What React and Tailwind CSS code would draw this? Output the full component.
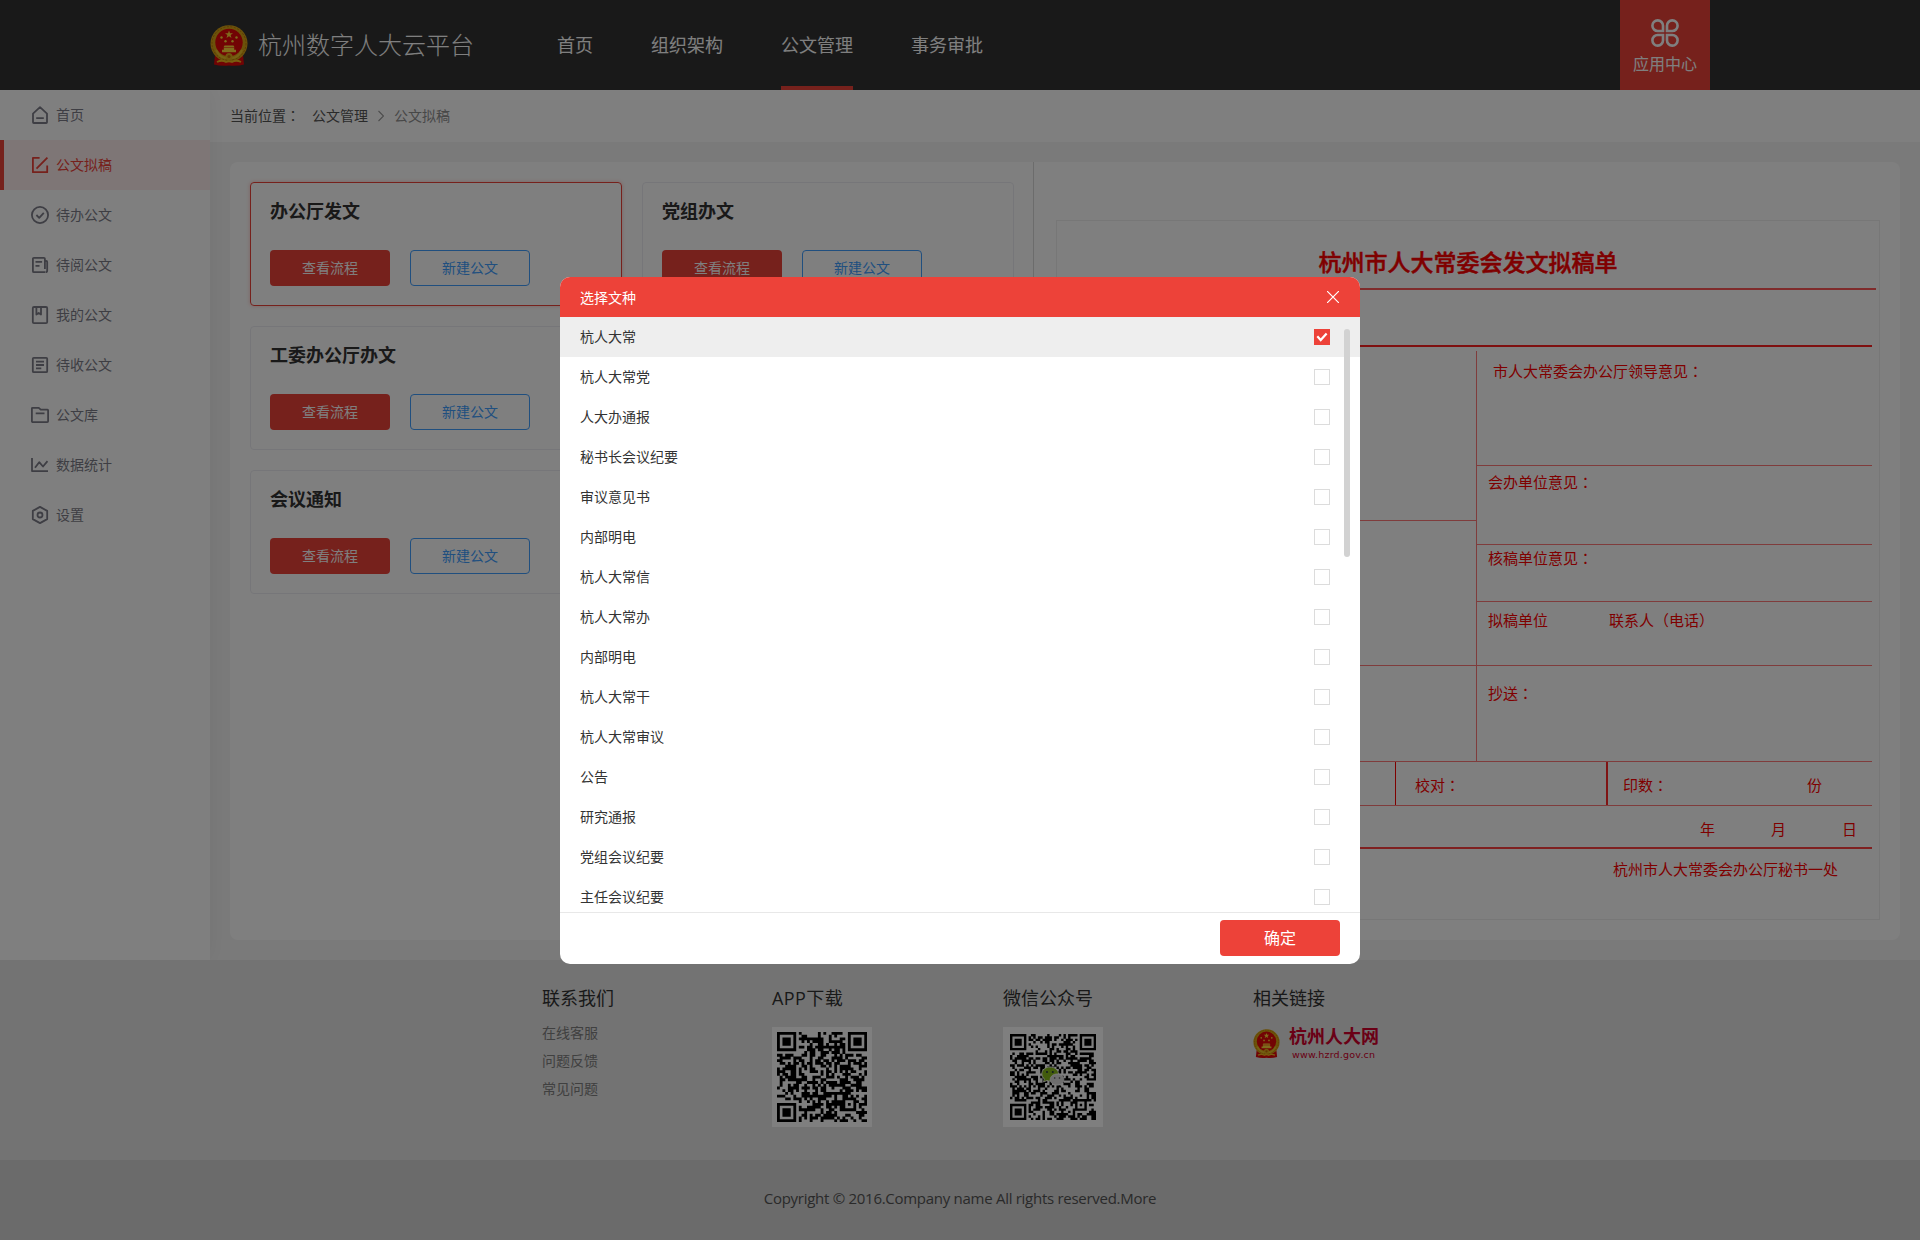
import React from 'react';

const NAV = ['首页', '组织架构', '公文管理', '事务审批'];

const SIDE = [
  { label: '首页', icon: 'home' },
  { label: '公文拟稿', icon: 'edit', active: true },
  { label: '待办公文', icon: 'check' },
  { label: '待阅公文', icon: 'read' },
  { label: '我的公文', icon: 'mine' },
  { label: '待收公文', icon: 'inbox' },
  { label: '公文库', icon: 'folder' },
  { label: '数据统计', icon: 'chart' },
  { label: '设置', icon: 'setting' },
];

const CARDS = [
  { title: '办公厅发文', active: true },
  { title: '党组办文' },
  { title: '工委办公厅办文' },
  { title: '信息刊物' },
  { title: '会议通知' },
];

const TYPES = [
  '杭人大常', '杭人大常党', '人大办通报', '秘书长会议纪要', '审议意见书',
  '内部明电', '杭人大常信', '杭人大常办', '内部明电', '杭人大常干',
  '杭人大常审议', '公告', '研究通报', '党组会议纪要', '主任会议纪要',
];

const SIDE_PATHS = {
  home: <path d="M2 7.6 9 1.2l7 6.4V16.2a.8.8 0 0 1-.8.8H2.8a.8.8 0 0 1-.8-.8zM5.2 12.2h7.6" />,
  edit: <path d="M8.6 1.9H1.9v14.3h14.3V9.4M5.5 12.6 16.4 1.7" />,
  check: (
    <>
      <circle cx="9" cy="9" r="8.1" />
      <path d="M5.4 9l2.8 2.8 4.6-5" />
    </>
  ),
  read: <path d="M14 16.2H2.9a1 1 0 0 1-1-1V2.8a1 1 0 0 1 1-1h10a1 1 0 0 1 1 1V13M14 5h1.3a.9.9 0 0 1 .9.9v8.6c0 1-.8 1.7-1.7 1.7M4.5 5.9h6.6M4.5 9.9h4" />,
  mine: (
    <>
      <rect x="1.8" y="1" width="14.4" height="16.1" rx="1.2" />
      <path d="M5.4 1v7.6L7.7 7l2.3 1.6V1" />
    </>
  ),
  inbox: (
    <>
      <rect x="1.8" y="1.8" width="14.4" height="14.4" rx="1" />
      <path d="M5 5.6h8M5 9h8M5 12.4h5.3" />
    </>
  ),
  folder: <path d="M.9 15.2V2.400a.6.6 0 0 1 .6-.6H7.800l1.900 1.900h6.800a.6.6 0 0 1 .6.6v10.900a.9.9 0 0 1-.9.9H1.800a.9.9 0 0 1-.9-.9zM4.700 7.400h8.800" />,
  chart: <path d="M1 2v13.100h16M4 11.800l4.200-5.600 3.800 4.300 4.500-5.300" />,
  setting: (
    <>
      <path d="M9 .9 16.200 4.900v8.200L9 17.100 1.800 13.100V4.900z" />
      <circle cx="9" cy="9" r="2.500" />
    </>
  ),
};

function SideIcon({ name }) {
  return (
    <svg width="18" height="18" viewBox="0 0 18 18" fill="none" stroke="currentColor" strokeWidth="1.8" strokeLinejoin="round">
      {SIDE_PATHS[name]}
    </svg>
  );
}

function Emblem({ className }) {
  return (
    <svg className={className} viewBox="0 0 38 41" fill="none">
      <path d="M5 30 4 39.500q7 2 15 1 8 1 15-1L33 30z" fill="#e00808" />
      <ellipse cx="19" cy="18.500" rx="18.500" ry="18.300" fill="#d9a514" />
      <ellipse cx="19" cy="18.500" rx="17" ry="16.800" stroke="#b87708" strokeDasharray="2 1.500" />
      <ellipse cx="19" cy="17.500" rx="13.700" ry="13.800" fill="#e40808" />
      <path d="M19 5.500l1 2.800h3l-2.400 1.700.9 2.900-2.500-1.700-2.500 1.700.9-2.900L15 8.300h3z" fill="#ffd83a" />
      <g fill="#ffd83a">
        <circle cx="11.500" cy="12.500" r="1.200" />
        <circle cx="26.500" cy="12.500" r="1.200" />
        <circle cx="15.500" cy="16.200" r="1.200" />
        <circle cx="22.500" cy="16.200" r="1.200" />
        <path d="M14.500 20.500h9l1 1.800h-11zM13.800 22.800h10.400v2H26v2.400H12v-2.400h1.800z" />
      </g>
      <path d="M6 25q4 8 10 8h6q6 0 10-8" stroke="#ecc02a" strokeWidth="2.200" />
      <circle cx="19" cy="31.500" r="3.600" fill="#e2ad1c" />
      <circle cx="19" cy="31.500" r="1.600" fill="#c66c06" />
      <path d="M7 37q5-2.500 9 0 3-1.500 6 0 4-2.500 9 0" stroke="#f0bb1f" strokeWidth="1.800" />
    </svg>
  );
}

function finderCell(r, c, n) {
  const at = (r0, c0) => {
    const y = r - r0;
    const x = c - c0;
    if (y < -1 || y > 7 || x < -1 || x > 7) return null;
    if (y === -1 || y === 7 || x === -1 || x === 7) return false;
    const ring = Math.max(Math.abs(y - 3), Math.abs(x - 3));
    return ring !== 2;
  };
  for (const p of [at(0, 0), at(0, n - 7), at(n - 7, 0)]) if (p !== null) return p;
  const d = Math.max(Math.abs(r - (n - 7)), Math.abs(c - (n - 7)));
  if (d <= 2) return d !== 1;
  return null;
}

function qrPath(n, seed) {
  let s = seed;
  let d = '';
  for (let r = 0; r < n; r++) {
    for (let c = 0; c < n; c++) {
      s = (Math.imul(s, 1103515245) + 12345) & 0x7fffffff;
      const fixed = finderCell(r, c, n);
      const on = fixed === null ? ((s >> 16) & 255) < 132 : fixed;
      if (on) d += `M${c} ${r}h1.04v1.04h-1.04z`;
    }
  }
  return d;
}

const QR_APP = qrPath(33, 4711);
const QR_WECHAT = qrPath(37, 90217);

function QrCode({ size, modules, path, wechat }) {
  return (
    <div className="relative flex h-[100px] w-[100px] items-center justify-center bg-white">
      <svg width={size} height={size} viewBox={`0 0 ${modules} ${modules}`}>
        <path d={path} fill="#000" />
      </svg>
      {wechat && (
        <svg className="absolute left-[38px] top-[39px]" width="24" height="21" viewBox="0 0 24 21">
          <path d="M9 1c4.800 0 8.500 3 8.500 7s-3.700 7-8.500 7q-1.500 0-3-.5L2.500 16l.8-3Q.8 11 .8 8C.8 4 4.300 1 9 1z" fill="#84b818" stroke="#fff" strokeWidth=".8" />
          <circle cx="6" cy="6" r="1" fill="#234" />
          <circle cx="11.800" cy="6" r="1" fill="#234" />
          <path d="M16 8c3.800 0 6.800 2.400 6.800 5.500 0 1.800-1 3.200-2.300 4.200l.5 2-2.400-1.200Q17.400 19 16 19c-3.800 0-6.800-2.500-6.800-5.500S12.200 8 16 8z" fill="#dcdcdc" stroke="#fff" strokeWidth=".8" />
          <circle cx="13.700" cy="12" r=".8" fill="#444" />
          <circle cx="18.500" cy="12" r=".8" fill="#444" />
        </svg>
      )}
    </div>
  );
}

/* Full-width punctuation set in the centre of its em box. */
function Mid({ children }) {
  return <span className="font-['Noto_Sans_CJK_TC',sans-serif]">{children}</span>;
}

function Header() {
  return (
    <header className="flex h-[90px] bg-[#333]">
      <div className="ml-[210px] flex w-[347px] items-center">
        <Emblem className="h-[41px] w-[38px]" />
        <span className="ml-[10px] pb-px text-[24px] font-light leading-none text-white">杭州数字人大云平台</span>
      </div>
      <nav className="flex gap-[58px] text-[18px] text-white">
        {NAV.map((n) => (
          <div key={n} className={`flex items-center border-y-4 border-t-transparent ${n === '公文管理' ? 'border-b-[#ed4239]' : 'border-b-transparent'}`}>
            {n}
          </div>
        ))}
      </nav>
      <div className="ml-auto mr-[210px] flex w-[90px] flex-col items-center bg-[#ed4239] pt-[19px] text-white">
        <svg width="28" height="28" viewBox="0 0 28 28" fill="none" stroke="currentColor" strokeWidth="2.600">
          <path d="M12 12H6.800A5.300 5.300 0 1 1 12 6.800zM16 12V6.800A5.300 5.300 0 1 1 21.200 12zM12 16v5.200A5.300 5.300 0 1 1 6.800 16zM16 16h5.200A5.300 5.300 0 1 1 16 21.200z" />
        </svg>
        <span className="mt-[5px] text-[16px] leading-6">应用中心</span>
      </div>
    </header>
  );
}

function Sidebar() {
  return (
    <aside className="relative z-10 w-[210px] shrink-0 bg-white text-[14px] text-[#7d7d88] shadow-[0_0_20px_rgba(0,0,0,0.06)]">
      {SIDE.map((s) => (
        <div
          key={s.label}
          className={`flex h-[50px] items-center gap-[7px] border-l-4 pl-[27px] ${s.active ? 'border-[#ed4239] bg-[#fdecec] text-[#ed4239]' : 'border-transparent'}`}
        >
          <SideIcon name={s.icon} />
          <span className="pb-[2px]">{s.label}</span>
        </div>
      ))}
    </aside>
  );
}

function Card({ title, active }) {
  return (
    <div className={`h-[124px] rounded border px-[19px] pt-[14px] ${active ? 'border-[#ed4239] shadow-[0_0_4px_rgba(237,66,57,0.3)]' : 'border-[#ededf2]'}`}>
      <h3 className="text-[18px] font-bold leading-7 text-[#333]">{title}</h3>
      <div className="mt-[25px] flex gap-5 text-[14px]">
        <button className="h-9 w-[120px] rounded bg-[#ed4239] pb-[2px] text-white">查看流程</button>
        <button className="h-9 w-[120px] rounded border border-[#409eff] pb-[2px] text-[#409eff]">新建公文</button>
      </div>
    </div>
  );
}

const THIN = 'border-[#ff7878]';

function DraftForm() {
  return (
    <div className="flex h-[700px] w-[824px] flex-col border border-[#eee] text-[15px] leading-[20px] text-[#f00]">
      <div className="flex h-[69px] items-center justify-center border-b-2 border-[#ff5656] pt-[14px] text-[23px] font-medium [-webkit-text-stroke:0.5px_#f00] mr-[3px] pl-[3px]">
        杭州市人大常委会发文拟稿单
      </div>
      <div className="ml-[8px] mr-[7px] h-[57px] border-b-2 border-[#ff2020]" />
      <div className="ml-[8px] mr-[7px] mt-[4px] flex h-[411px]">
        <div className="flex w-[411px] flex-col">
          <div className={`h-[170px] border-b ${THIN}`} />
          <div className={`h-[145px] border-b ${THIN}`} />
          <div className={`flex-1 border-b ${THIN}`} />
        </div>
        <div className={`flex flex-1 flex-col border-l ${THIN}`}>
          <div className={`h-[115px] border-b pl-4 pt-[10px] ${THIN}`}>市人大常委会办公厅领导意见<Mid>：</Mid></div>
          <div className={`h-[79px] border-b pl-[11px] pt-[6px] ${THIN}`}>会办单位意见<Mid>：</Mid></div>
          <div className={`h-[57px] border-b pl-[11px] pt-[3px] ${THIN}`}>核稿单位意见<Mid>：</Mid></div>
          <div className={`flex h-[64px] border-b pl-[11px] pt-[8px] ${THIN}`}>
            <span className="w-[121px]">拟稿单位</span>
            <span>联系人<Mid>（</Mid>电话<Mid>）</Mid></span>
          </div>
          <div className={`flex-1 border-b pl-[11px] pt-[17px] ${THIN}`}>抄送<Mid>：</Mid></div>
        </div>
      </div>
      <div className={`ml-[8px] mr-[7px] flex h-[44px] items-center border-b ${THIN}`}>
        <div className="h-full w-[331px] border-r border-[#f00]" />
        <div className="flex h-full w-[212px] items-center border-r-2 border-[#ff2828] pl-[19px] pt-[2px]">校对<Mid>：</Mid></div>
        <div className="flex flex-1 items-center justify-between pl-[15px] pr-[50px] pt-[2px]">
          <span>印数<Mid>：</Mid></span>
          <span>份</span>
        </div>
      </div>
      <div className="ml-[8px] mr-[7px] flex h-[43px] items-center justify-end gap-[56px] border-b-2 border-[#ff4040] pr-[15px] pt-[5px]">
        <span>年</span>
        <span>月</span>
        <span>日</span>
      </div>
      <div className="mr-[41px] pt-[10px] text-right">杭州市人大常委会办公厅秘书一处</div>
    </div>
  );
}

function Footer() {
  return (
    <footer>
      <div className="flex h-[200px] bg-[#e6e6e6] pl-[542px] pt-[24px] text-[#333]">
        <div className="w-[230px]">
          <h4 className="text-[18px] leading-7">联系我们</h4>
          <div className="mt-[7px] text-[14px] leading-[28px] text-[#808080]">
            <div>在线客服</div>
            <div>问题反馈</div>
            <div>常见问题</div>
          </div>
        </div>
        <div className="w-[231px]">
          <h4 className="mb-[15px] text-[18px] leading-7 tracking-[0.4px]">APP下载</h4>
          <QrCode size={90} modules={33} path={QR_APP} />
        </div>
        <div className="w-[250px]">
          <h4 className="mb-[15px] text-[18px] leading-7">微信公众号</h4>
          <QrCode size={86} modules={37} path={QR_WECHAT} wechat />
        </div>
        <div>
          <h4 className="text-[18px] leading-7">相关链接</h4>
          <div className="mt-[12px] flex text-[#d4002c]">
            <Emblem className="mt-[5px] h-[29px] w-[27px]" />
            <div className="ml-[9px]">
              <div className="text-[18px] font-bold leading-6">杭州人大网</div>
              <div className="pl-[3px] font-['DejaVu_Sans'] text-[9.500px] leading-[13px] tracking-[0.2px]">www.hzrd.gov.cn</div>
            </div>
          </div>
        </div>
      </div>
      <div className="flex h-[80px] items-center justify-center bg-[#d6d6d6] pb-[3px] text-[15px] tracking-[-0.28px] text-[#555]">
        Copyright © 2016.Company name All rights reserved.More
      </div>
    </footer>
  );
}

function TypeDialog() {
  return (
    <div className="relative flex h-[687px] w-[800px] flex-col overflow-hidden rounded-[10px] bg-white text-[14px] text-[#333]">
      <div className="flex h-10 shrink-0 items-center justify-between bg-[#ed4239] pl-5 pr-[21px] text-white">
        选择文种
        <svg width="12" height="12" viewBox="0 0 12 12" stroke="currentColor" strokeWidth="1.200">
          <path d="M0 0l12 12M12 0L0 12" />
        </svg>
      </div>
      <div className="h-[595px] overflow-hidden">
        {TYPES.map((t, i) => (
          <div key={i} className={`flex h-10 items-center justify-between pl-5 pr-[30px] ${i === 0 ? 'bg-[#eee]' : ''}`}>
            <span className="pb-[2px]">{t}</span>
            {i === 0 ? (
              <span className="flex h-4 w-4 items-center justify-center bg-[#ed4239]">
                <svg width="16" height="16" viewBox="0 0 16 16" fill="none" stroke="#fff" strokeWidth="2.2">
                  <path d="M3.300 7.300l3.400 3.700L12.600 4.400" />
                </svg>
              </span>
            ) : (
              <span className="h-4 w-4 border border-[#dcdcdc] bg-white" />
            )}
          </div>
        ))}
      </div>
      <div className="flex flex-1 justify-end border-t border-[#e8e8e8] pr-5 pt-[7px]">
        <button className="h-9 w-[120px] rounded bg-[#ed4239] text-[16px] text-white">确定</button>
      </div>
      <div className="absolute right-[10px] top-[52px] h-[228px] w-[6px] rounded-full bg-[#d2d2d2]" />
    </div>
  );
}

export default function App() {
  return (
    <div className="relative h-[1240px] w-[1920px] overflow-hidden bg-[#f5f5f5] font-['Open_Sans','Noto_Sans_CJK_SC',sans-serif]">
      <Header />
      <div className="flex h-[870px] overflow-hidden">
        <Sidebar />
        <main className="flex-1">
          <div className="flex h-[52px] items-center bg-white pl-5 text-[14px] text-[#555]">
            <span className="w-[82px] pb-[2px]">当前位置<Mid>：</Mid></span>
            <span className="pb-[2px]">公文管理</span>
            <svg className="mx-[10px]" width="6" height="12" viewBox="0 0 6 12" fill="none" stroke="#999" strokeWidth="1.100">
              <path d="M.5 1l5 5-5 5" />
            </svg>
            <span className="pb-[2px] text-[#909090]">公文拟稿</span>
          </div>
          <div className="mx-5 mt-5 flex h-[778px] rounded-lg bg-white">
            <div className="grid w-[804px] grid-cols-[372px_372px] content-start gap-5 border-r border-[#d9d9d9] p-5 pr-0">
              {CARDS.map((c) => (
                <Card key={c.title} title={c.title} active={c.active} />
              ))}
            </div>
            <div className="pl-[22px] pt-[58px]">
              <DraftForm />
            </div>
          </div>
        </main>
      </div>
      <Footer />
      <div className="absolute inset-0 z-20 flex justify-center bg-black/50 pt-[277px]">
        <TypeDialog />
      </div>
    </div>
  );
}
